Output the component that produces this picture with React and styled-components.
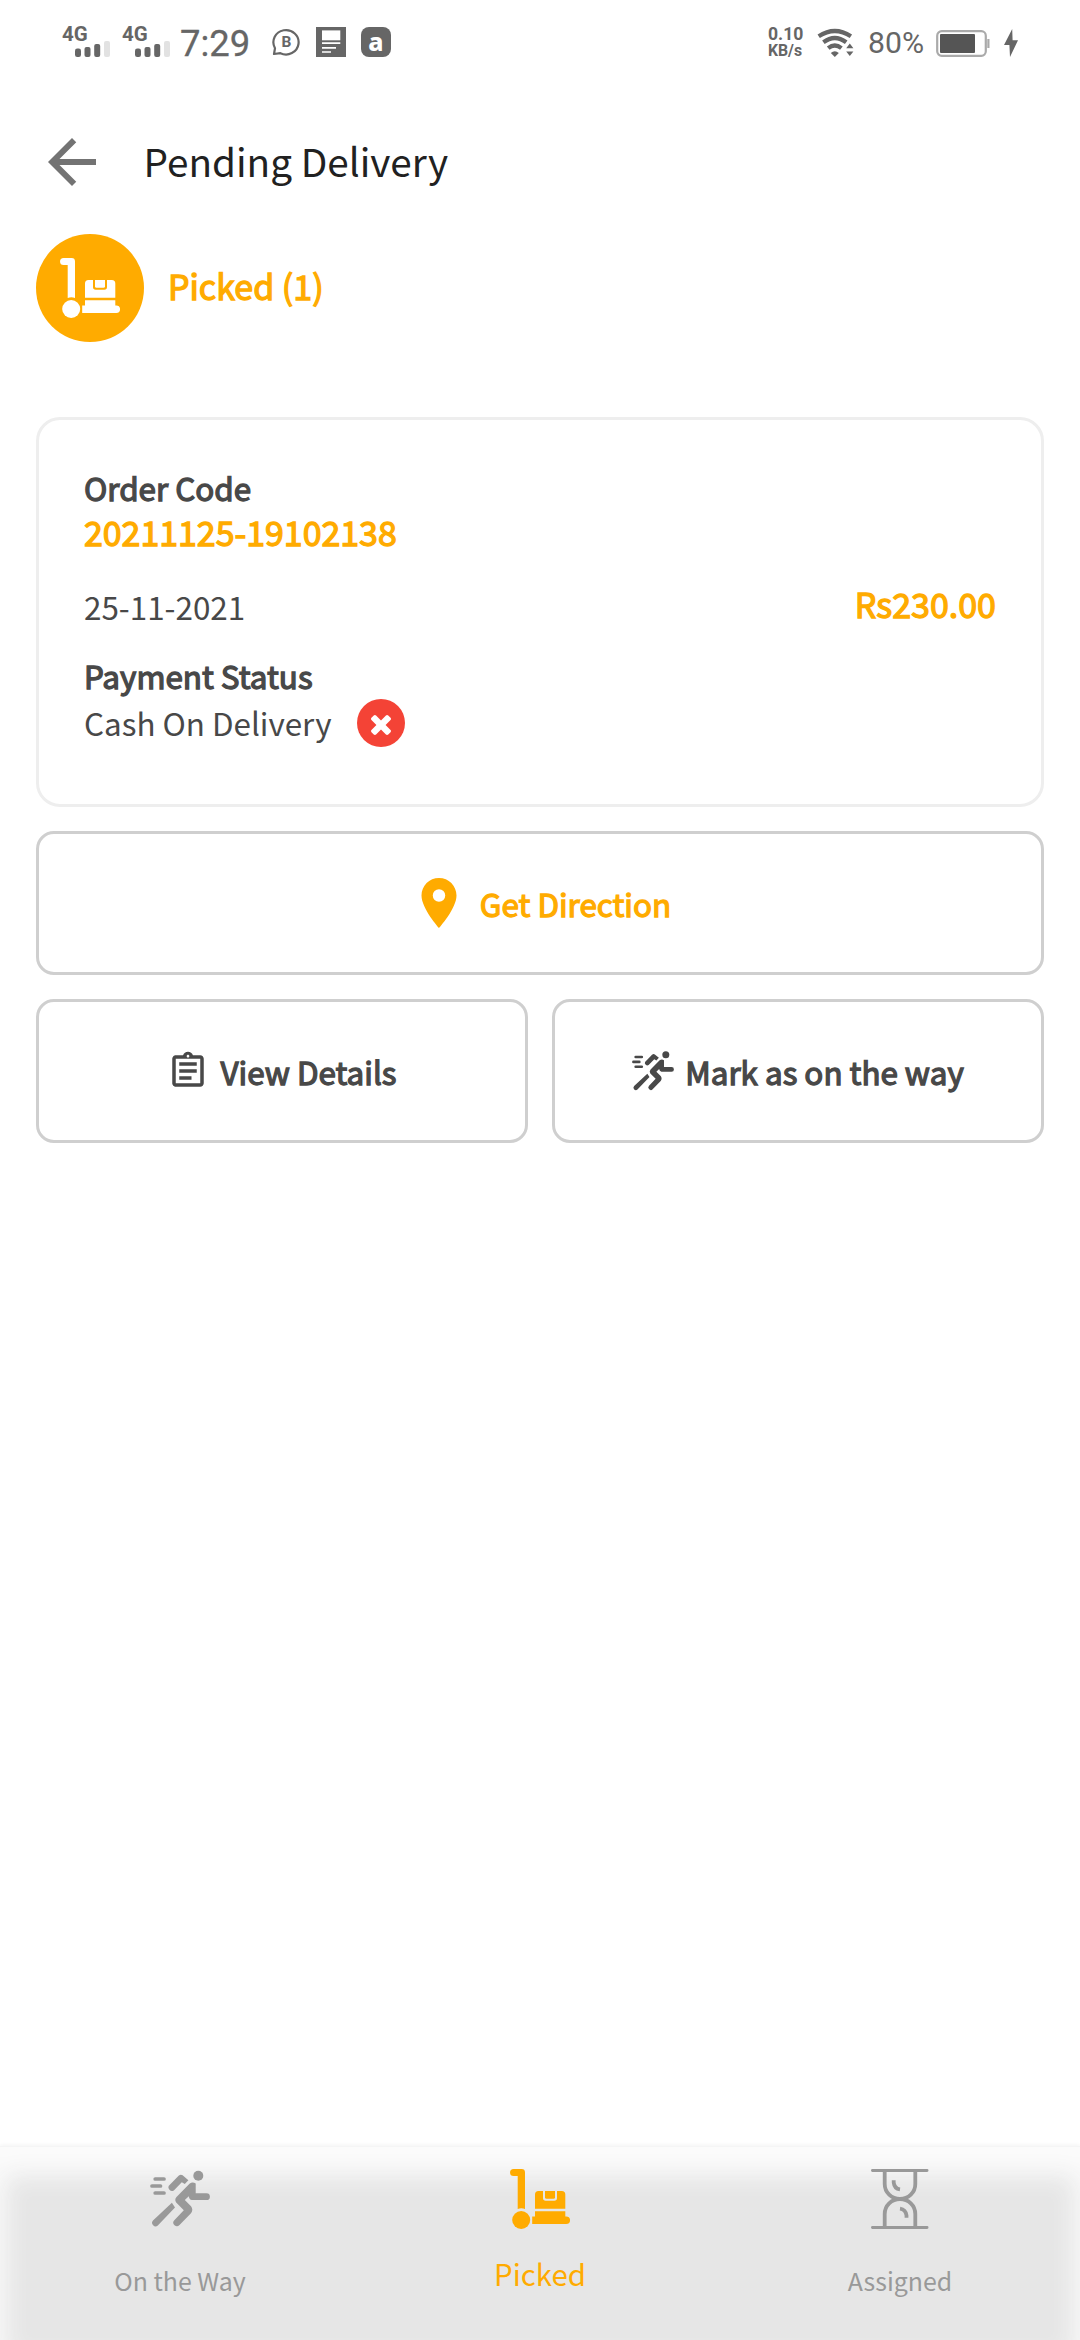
import React from "react";
import styled, { createGlobalStyle, css } from "styled-components";
import { MdArrowBack, MdLocationOn, MdOutlineAssignment } from "react-icons/md";

const amber = "#ffab00";
const ink = "#484848";
const statusGrey = "#666666";

const GlobalStyle = createGlobalStyle`
  * { box-sizing: border-box; }
  body {
    margin: 0;
    background: #fff;
    font-family: "Noto Sans CJK JP", "Noto Sans", sans-serif;
  }
  svg { display: block; flex: none; }
`;

const Screen = styled.div`
  display: flex;
  flex-direction: column;
  width: 1080px;
  height: 2340px;
  overflow: hidden;
  background: #fff;
`;

/* ---------- status bar ---------- */

const StatusBar = styled.div`
  display: flex;
  justify-content: space-between;
  height: 85px;
  margin-bottom: 5px;
  padding: 0 62px;
  color: ${statusGrey};
  font-family: Roboto, sans-serif;
`;

const StatusGroup = styled.div`
  display: flex;
  align-items: center;
`;

const Signal = styled.div`
  display: flex;
  flex-direction: column;
  width: 48px;
  margin-right: 12px;
  padding-bottom: 3px;
`;

const SignalLabel = styled.span`
  font-size: 20.5px;
  font-weight: 700;
  line-height: 18px;
`;

const SignalBars = styled.svg`
  align-self: flex-end;
  margin-top: -2px;
`;

const Clock = styled.span`
  width: 92px;
  margin-left: -2px;
  padding-top: 2px;
  font-size: 36.4px;
  font-weight: 400;
  line-height: 40px;
  -webkit-text-stroke: 0.3px currentColor;
`;

const Notifications = styled.div`
  display: flex;
  align-items: center;
  gap: 15px;
  padding-bottom: 1px;
`;

const AppBadge = styled.span`
  display: flex;
  align-items: center;
  justify-content: center;
  width: 30px;
  height: 30px;
  padding-bottom: 3px;
  border-radius: 8px;
  background: ${statusGrey};
  color: #fff;
  font-family: "Noto Sans", sans-serif;
  font-size: 25px;
  font-weight: 800;
  line-height: 30px;
`;

const Speed = styled.div`
  display: flex;
  flex-direction: column;
  width: 49px;
  font-weight: 700;
  line-height: 15.5px;
`;

const SpeedLine = styled.span`
  font-size: ${(p) => p.$size}px;
`;

const Percent = styled.span`
  width: 68px;
  margin-left: 14px;
  font-size: 30.2px;
  line-height: 40px;
`;

const Battery = styled.svg`
  margin-top: 2px;
  margin-right: 14px;
`;

/* ---------- header ---------- */

const Header = styled.header`
  display: flex;
  align-items: center;
  height: 144px;
  padding-left: 36px;
  color: #737373;
`;

const Title = styled.h1`
  margin: 0 0 0 35.5px;
  padding-bottom: 5px;
  color: #212121;
  font-size: 38.7px;
  font-weight: 400;
  line-height: 60px;
`;

/* ---------- content ---------- */

const Content = styled.main`
  display: flex;
  flex-direction: column;
  flex: 1;
  padding: 0 36px;
`;

const heavy = css`
  -webkit-text-stroke: 1.3px currentColor;
`;

const Summary = styled.div`
  display: flex;
  align-items: center;
  gap: 24px;
`;

const RoundIcon = styled.div`
  display: grid;
  place-items: center;
  width: 108px;
  height: 108px;
  border-radius: 50%;
  background: ${amber};
  color: #fff;
`;

const SummaryText = styled.span`
  ${heavy}
  padding-bottom: 4px;
  color: ${amber};
  font-size: 34px;
  line-height: 50px;
`;

const Card = styled.section`
  display: flex;
  flex-direction: column;
  height: 390px;
  margin-top: 75px;
  padding: 45px 45px 0;
  border: 3px solid #eeeeee;
  border-radius: 24px;
  background: #fff;
  color: ${ink};
  font-size: 31.4px;
`;

const FieldName = styled.span`
  ${heavy}
  font-size: 31.4px;
  line-height: 46px;
`;

const OrderCode = styled.span`
  ${heavy}
  color: ${amber};
  font-size: 33.9px;
  line-height: 42px;
`;

const DateRow = styled.div`
  display: flex;
  justify-content: space-between;
  align-items: center;
  height: 46px;
  margin: 30px 0 24px;
`;

const Amount = styled.span`
  ${heavy}
  padding-bottom: 5px;
  color: ${amber};
  font-size: 34px;
  line-height: 46px;
`;

const PaymentRow = styled.div`
  display: flex;
  align-items: center;
  gap: 25px;
  height: 48px;
  line-height: 48px;
`;

const UnpaidMark = styled.span`
  display: grid;
  place-items: center;
  width: 48px;
  height: 48px;
  padding-top: 4px;
  border-radius: 50%;
  background: #f44336;
  color: #fff;
`;

const Actions = styled.div`
  display: grid;
  grid-template-columns: 1fr 1fr;
  gap: 24px;
  margin-top: 24px;
`;

const ActionButton = styled.button`
  display: flex;
  align-items: center;
  justify-content: center;
  gap: 11px;
  grid-column: ${(p) => (p.$wide ? "1 / -1" : "auto")};
  height: 144px;
  padding: 0;
  border: 3px solid #cfcfcf;
  border-radius: 18px;
  background: #fff;
  color: ${(p) => (p.$accent ? amber : ink)};
  font-family: inherit;
  font-size: 31.4px;
  line-height: 48px;
`;

const ActionText = styled.span`
  ${heavy}
  padding-top: 1px;
`;

/* ---------- bottom navigation ---------- */

const BottomNav = styled.nav`
  display: grid;
  grid-template-columns: repeat(3, 1fr);
  height: 194px;
  background: #e6e6e6;
  box-shadow:
    inset 0 1px 0 #f5f5f5,
    inset 0 24px 24px 5px #fbfbfb,
    0 -1px 4px rgba(0, 0, 0, 0.05);
`;

const NavItem = styled.div`
  display: flex;
  flex-direction: column;
  align-items: center;
  gap: ${(p) => (p.$active ? 24 : 31)}px;
  padding-top: 23px;
  color: ${(p) => (p.$active ? amber : "#999999")};
  font-size: ${(p) => (p.$active ? 29.4 : 24.9)}px;
  line-height: 40px;
`;

/* ---------- icons ---------- */

const CartIcon = () => (
  <svg width="60" height="60" viewBox="0 0 60 60" fill="currentColor">
    <path d="M3.6 0H11.6a3.4 3.4 0 0 1 3.4 3.4V39.9a13 13 0 0 0-7.3 0V7.1H3.6a3.5 3.5 0 0 1 0-7.1z" />
    <circle cx="11.2" cy="51" r="9" />
    <path d="M25 39.7V25.5a3.5 3.5 0 0 1 3.5-3.5H33v7a2.7 2.7 0 0 0 2.7 2.7h8.6a2.7 2.7 0 0 0 2.7-2.7v-7h4.8a3.5 3.5 0 0 1 3.5 3.5v14.2z" />
    <path d="M35 22h10v6.2a1.5 1.5 0 0 1-1.5 1.5h-7a1.5 1.5 0 0 1-1.5-1.5z" />
    <path d="M25 42.3H55.3V47.5h1a3.75 3.75 0 0 1 0 7.5H22.2V47.5H25z" />
  </svg>
);

const RunnerIcon = ({ size }) => (
  <svg width={size} height={size} viewBox="0 0 60 60" fill="currentColor">
    <circle cx="48.3" cy="6.7" r="5" />
    <path d="M5.2 10H14M2 17H10.5M5.2 24H14" fill="none" stroke="currentColor" strokeWidth="3.7" strokeLinecap="round" />
    <path d="M21.9 33.8L25 38.4L7.8 56.4A3.4 3.4 0 0 1 3 51.6z" />
    <path d="M18.6 17L28.6 6.8Q30.6 5.2 32.6 6.3L38.4 11.2L34.8 15L31.8 13.2L23.8 21.4A3.6 3.6 0 0 1 18.6 17z" />
    <path d="M39.5 14.8Q42.5 12.3 45.7 14.6V24.3H56.5a3.4 3.4 0 0 1 0 6.8H42Q39.2 30.6 38.8 27.2L34.8 31L41 37.3Q43.6 41 41 44.3L29.5 56A3.5 3.5 0 0 1 24.3 51.2L33.8 41.2L26.2 33.6Q24.2 30.6 26.5 28z" />
  </svg>
);

const HourglassIcon = () => (
  <svg width="60" height="60" viewBox="0 0 60 60" fill="none" stroke="currentColor">
    <path d="M2.4 1.5H57.1M2.4 58.5H57.1" strokeWidth="2.8" strokeLinecap="round" />
    <path
      d="M14.7 2V15C14.7 23.5 21.5 30 30 30S45.3 23.5 45.3 15V2M14.7 58.5V45C14.7 36.5 21.5 30 30 30S45.3 36.5 45.3 45V58.5"
      strokeWidth="3.8"
    />
    <path d="M23.7 11.3V13.5Q24.3 19.6 30 20.4M30 39.6Q35.7 40.4 36.5 46.5V48.8" strokeWidth="3.8" />
  </svg>
);

const CrossIcon = () => (
  <svg width="20" height="20" viewBox="302 366 1188 1188" fill="currentColor">
    <path d="M1490 1322q0 40-28 68l-136 136q-28 28-68 28t-68-28l-294-294-294 294q-28 28-68 28t-68-28l-136-136q-28-28-28-68t28-68l294-294-294-294q-28-28-28-68t28-68l136-136q28-28 68-28t68 28l294 294 294-294q28-28 68-28t68 28l136 136q28 28 28 68t-28 68l-294 294 294 294q28 28 28 68z" />
  </svg>
);

const ChatIcon = () => (
  <svg width="29" height="28" viewBox="0 0 29 28">
    <path
      d="M2 26L3 20.2A12.6 12.2 0 1 1 8.4 25.2z"
      fill="none"
      stroke="currentColor"
      strokeWidth="2.2"
      strokeLinejoin="round"
    />
    <text x="14.5" y="19" textAnchor="middle" fontFamily="Roboto, sans-serif" fontSize="15.5" fontWeight="700" fill="currentColor">
      B
    </text>
  </svg>
);

const NoteIcon = () => (
  <svg width="30" height="30" viewBox="0 0 30 30">
    <rect width="30" height="30" fill="currentColor" />
    <path d="M6 3.4H24.3V13.3H6z" fill="#fff" />
    <path d="M6 16.2H24.3M6 20.8H20M6 25H15" stroke="#fff" strokeWidth="1.7" />
  </svg>
);

const WifiIcon = () => (
  <svg width="37" height="29" viewBox="0 0 37 29">
    <path
      d="M1.7 8.3Q17.8-2.3 33.9 8.3M6.4 14.3Q17.8 5.7 29.2 14.3M11.2 20.2Q17.8 14.8 24.4 20.2"
      fill="none"
      stroke="currentColor"
      strokeWidth="4.2"
    />
    <path d="M13.8 25Q17.8 21.6 21.8 25L17.8 29z" fill="currentColor" />
    <path d="M32.8 15.6L36.4 20.3H29.2zM29.2 23.4H36.4L32.8 28z" fill="currentColor" />
  </svg>
);

const BoltIcon = () => (
  <svg width="14" height="28" viewBox="0 0 14 28" fill="currentColor">
    <path d="M8.2 0L0 16H5.4L6 28L14 11.2H8.6z" />
  </svg>
);

const CellSignal = () => (
  <Signal>
    <SignalLabel>4G</SignalLabel>
    <SignalBars width="35" height="16" viewBox="0 0 35 16">
      <rect x="0" y="7.5" width="6" height="8.5" rx="2.2" fill={statusGrey} />
      <rect x="9.5" y="6" width="6" height="10" rx="2" fill={statusGrey} />
      <rect x="19.2" y="3" width="6" height="13" rx="2" fill={statusGrey} />
      <rect x="29" y="0" width="6" height="16" rx="2" fill="#e2e2e2" />
    </SignalBars>
  </Signal>
);

const tabs = [
  { label: "On the Way", icon: <RunnerIcon size={60} /> },
  { label: "Picked", icon: <CartIcon />, active: true },
  { label: "Assigned", icon: <HourglassIcon /> },
];

export default function App() {
  return (
    <Screen>
      <GlobalStyle />
      <StatusBar>
        <StatusGroup>
          <CellSignal />
          <CellSignal />
          <Clock>7:29</Clock>
          <Notifications>
            <ChatIcon />
            <NoteIcon />
            <AppBadge>a</AppBadge>
          </Notifications>
        </StatusGroup>
        <StatusGroup>
          <Speed>
            <SpeedLine $size={17.6}>0.10</SpeedLine>
            <SpeedLine $size={15.8}>KB/s</SpeedLine>
          </Speed>
          <WifiIcon />
          <Percent>80%</Percent>
          <Battery width="54" height="27" viewBox="0 0 54 27">
            <rect x="1.2" y="1.2" width="48.6" height="24.6" rx="4.5" fill="#fff" stroke="#aaaaaa" strokeWidth="2.2" />
            <rect x="4" y="4" width="35" height="19" rx="1" fill="#555555" />
            <path d="M52.4 9V18" stroke="#aaaaaa" strokeWidth="2.2" />
          </Battery>
          <BoltIcon />
        </StatusGroup>
      </StatusBar>

      <Header>
        <MdArrowBack size={72} />
        <Title>Pending Delivery</Title>
      </Header>

      <Content>
        <Summary>
          <RoundIcon>
            <CartIcon />
          </RoundIcon>
          <SummaryText>Picked (1)</SummaryText>
        </Summary>

        <Card>
          <FieldName>Order Code</FieldName>
          <OrderCode>20211125-19102138</OrderCode>
          <DateRow>
            <span>25-11-2021</span>
            <Amount>Rs230.00</Amount>
          </DateRow>
          <FieldName>Payment Status</FieldName>
          <PaymentRow>
            <span>Cash On Delivery</span>
            <UnpaidMark>
              <CrossIcon />
            </UnpaidMark>
          </PaymentRow>
        </Card>

        <Actions>
          <ActionButton $wide $accent>
            <MdLocationOn size={60} />
            <ActionText>Get Direction</ActionText>
          </ActionButton>
          <ActionButton>
            <MdOutlineAssignment size={42} />
            <ActionText>View Details</ActionText>
          </ActionButton>
          <ActionButton>
            <RunnerIcon size={42} />
            <ActionText>Mark as on the way</ActionText>
          </ActionButton>
        </Actions>
      </Content>

      <BottomNav>
        {tabs.map((tab) => (
          <NavItem key={tab.label} $active={tab.active}>
            {tab.icon}
            <span>{tab.label}</span>
          </NavItem>
        ))}
      </BottomNav>
    </Screen>
  );
}
